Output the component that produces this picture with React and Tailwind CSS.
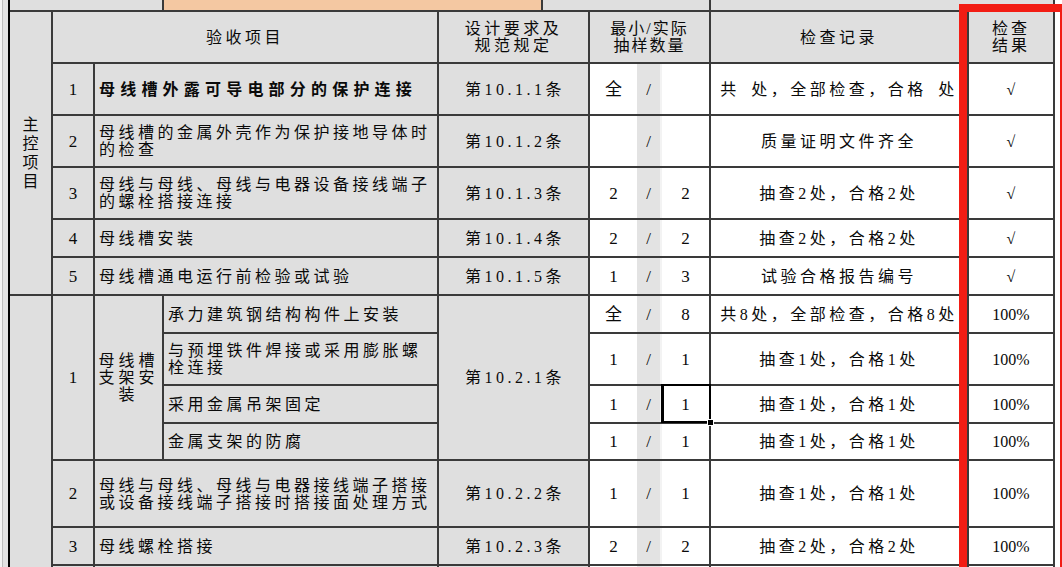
import React from 'react';

const mainRows = [
  {
    n: '1',
    item: ['母线槽外露可导电部分的保护连接'],
    bold: true,
    spec: '第10.1.1条',
    min: '全',
    act: '',
    rec: '共\u2002处，全部检查，合格\u2002处',
    res: '√',
    row: 'row-start-2',
  },
  {
    n: '2',
    item: ['母线槽的金属外壳作为保护接地导体时', '的检查'],
    spec: '第10.1.2条',
    min: '',
    act: '',
    rec: '质量证明文件齐全',
    res: '√',
    row: 'row-start-3',
  },
  {
    n: '3',
    item: ['母线与母线、母线与电器设备接线端子', '的螺栓搭接连接'],
    spec: '第10.1.3条',
    min: '2',
    act: '2',
    rec: '抽查2处，合格2处',
    res: '√',
    row: 'row-start-4',
  },
  {
    n: '4',
    item: ['母线槽安装'],
    spec: '第10.1.4条',
    min: '2',
    act: '2',
    rec: '抽查2处，合格2处',
    res: '√',
    row: 'row-start-5',
  },
  {
    n: '5',
    item: ['母线槽通电运行前检验或试验'],
    spec: '第10.1.5条',
    min: '1',
    act: '3',
    rec: '试验合格报告编号',
    res: '√',
    row: 'row-start-6',
  },
];

// sub rows of 母线槽支架安装
const subRows = [
  { item: ['承力建筑钢结构构件上安装'], min: '全', act: '8', rec: '共8处，全部检查，合格8处', res: '100%', row: 'row-start-7' },
  { item: ['与预埋铁件焊接或采用膨胀螺', '栓连接'], min: '1', act: '1', rec: '抽查1处，合格1处', res: '100%', row: 'row-start-8' },
  { item: ['采用金属吊架固定'], min: '1', act: '1', rec: '抽查1处，合格1处', res: '100%', row: 'row-start-9', selected: true },
  { item: ['金属支架的防腐'], min: '1', act: '1', rec: '抽查1处，合格1处', res: '100%', row: 'row-start-10' },
];

const generalRows = [
  {
    n: '2',
    item: ['母线与母线、母线与电器接线端子搭接', '或设备接线端子搭接时搭接面处理方式'],
    spec: '第10.2.2条',
    min: '1',
    act: '1',
    rec: '抽查1处，合格1处',
    res: '100%',
    row: 'row-start-11',
  },
  {
    n: '3',
    item: ['母线螺栓搭接'],
    spec: '第10.2.3条',
    min: '2',
    act: '2',
    rec: '抽查2处，合格2处',
    res: '100%',
    row: 'row-start-12',
  },
  { n: '', item: [''], spec: '', min: '', act: '', rec: '', res: '', row: 'row-start-13', blank: true },
];

const Lines = ({ lines }) =>
  lines.map((l, i) => (
    <span key={i} className="block whitespace-nowrap">
      {l}
    </span>
  ));

const Sample = ({ min, act, row, selected, blank }) => (
  <div className={`col-start-6 ${row} flex bg-white tracking-normal text-[17px]`}>
    <div className="w-[47px] flex items-center justify-center">{min}</div>
    <div className={`w-[25px] flex items-center justify-center border-r-2 border-[#f3f3f3] ${blank ? 'bg-[#e6e6e6]' : 'bg-[#e3e3e3]'}`}>
      {blank ? '' : '/'}
    </div>
    <div className="relative flex-1 flex items-center justify-center">
      {act}
      {selected && (
        <>
          <div className="absolute -left-[1px] -top-[2px] -right-[2px] -bottom-[1px] border-2 border-l-[3px] border-black" />
          <div className="absolute -right-[5px] -bottom-[4px] w-[7px] h-[7px] bg-black border border-white" />
        </>
      )}
    </div>
  </div>
);

const Tail = ({ rec, res, row }) => (
  <>
    <div className={`col-start-7 ${row} flex items-center justify-center bg-white whitespace-nowrap overflow-hidden`}>
      {rec}
    </div>
    <div className={`col-start-8 ${row} flex items-center justify-center bg-white tracking-normal`}>
      {res}
    </div>
  </>
);

export default function App() {
  return (
    <div className="relative w-[1062px] h-[567px] overflow-hidden bg-white text-[16px] leading-[17px] tracking-[3.5px] text-[#0a0a0a] font-['Liberation_Serif','Noto_Sans_CJK_SC',serif]">
      <div className="flex">
        {/* sheet edge */}
        <div className="flex w-[8px] shrink-0">
          <div className="w-[2px] bg-[#f3f3f3]" />
          <div className="w-[1px] bg-[#bdbdbd]" />
          <div className="flex-1 bg-[#e2e2e2]" />
        </div>

        <div className="border-l-2 border-black">
          {/* row above header */}
          <div className="flex h-[10px] gap-[2px] bg-[#3a3a3a] pr-[2px]">
            <div className="w-[152px] bg-[#dfdfdf]" />
            <div className="w-[377px] bg-[#f4c8a2]" />
            <div className="w-[166px] bg-[#dfdfdf]" />
            <div className="w-[342px] bg-[#dfdfdf]" />
          </div>

          <div className="grid grid-cols-[41px_40px_67px_273px_149px_119px_256px_84px] grid-rows-[50px_50px_50px_50px_36px_36px_36px_50px_36px_35px_65px_36px_40px] gap-[2px] bg-[#3a3a3a] pt-[2px] pr-[2px] pb-[2px]">
            {/* section label */}
            <div className="col-start-1 row-start-1 row-span-6 flex items-center justify-center bg-[#dfdfdf] leading-[19px] tracking-normal text-center">
              <span>
                主<br />控<br />项<br />目
              </span>
            </div>

            {/* header */}
            <div className="col-start-2 col-span-3 row-start-1 flex items-center justify-center bg-[#dfdfdf]">验收项目</div>
            <div className="col-start-5 row-start-1 flex items-center justify-center bg-[#dfdfdf] text-center">
              <span>
                设计要求及<br />规范规定
              </span>
            </div>
            <div className="col-start-6 row-start-1 flex items-center justify-center bg-[#dfdfdf] text-center tracking-[2px]">
              <span>
                最小/实际<br />抽样数量
              </span>
            </div>
            <div className="col-start-7 row-start-1 flex items-center justify-center bg-[#dfdfdf]">检查记录</div>
            <div className="col-start-8 row-start-1 flex items-center justify-center bg-[#dfdfdf] text-center tracking-[3px]">
              <span>
                检查<br />结果
              </span>
            </div>

            {/* main control rows */}
            {mainRows.map((r) => (
              <React.Fragment key={r.row}>
                <div className={`col-start-2 ${r.row} flex items-center justify-center bg-[#dfdfdf] tracking-normal text-[17px]`}>{r.n}</div>
                <div className={`col-start-3 col-span-2 ${r.row} flex items-center bg-[#dfdfdf] pl-[4px] ${r.bold ? 'font-bold tracking-[5.2px]' : ''}`}>
                  <div>
                    <Lines lines={r.item} />
                  </div>
                </div>
                <div className={`col-start-5 ${r.row} flex items-center justify-center bg-[#dfdfdf] pl-[3px]`}>{r.spec}</div>
                <Sample min={r.min} act={r.act} row={r.row} />
                <Tail rec={r.rec} res={r.res} row={r.row} />
              </React.Fragment>
            ))}

            {/* second section label (empty) */}
            <div className="col-start-1 row-start-7 row-span-7 bg-[#dfdfdf]" />

            {/* 支架安装 group */}
            <div className="col-start-2 row-start-7 row-span-4 flex items-center justify-center bg-[#dfdfdf] tracking-normal text-[17px]">1</div>
            <div className="col-start-3 row-start-7 row-span-4 flex items-center justify-center bg-[#dfdfdf] text-center tracking-[4px]">
              <span>
                母线槽<br />支架安<br />装
              </span>
            </div>
            <div className="col-start-5 row-start-7 row-span-4 flex items-center justify-center bg-[#dfdfdf] pl-[3px]">第10.2.1条</div>
            {subRows.map((r) => (
              <React.Fragment key={r.row}>
                <div className={`col-start-4 ${r.row} flex items-center bg-[#dfdfdf] pl-[4px]`}>
                  <div>
                    <Lines lines={r.item} />
                  </div>
                </div>
                <Sample min={r.min} act={r.act} row={r.row} selected={r.selected} />
                <Tail rec={r.rec} res={r.res} row={r.row} />
              </React.Fragment>
            ))}

            {/* remaining general rows */}
            {generalRows.map((r) => (
              <React.Fragment key={r.row}>
                <div className={`col-start-2 ${r.row} flex items-center justify-center bg-[#dfdfdf] tracking-normal text-[17px]`}>{r.n}</div>
                <div className={`col-start-3 col-span-2 ${r.row} flex items-center bg-[#dfdfdf] pl-[4px]`}>
                  <div>
                    <Lines lines={r.item} />
                  </div>
                </div>
                <div className={`col-start-5 ${r.row} flex items-center justify-center bg-[#dfdfdf] pl-[3px]`}>{r.spec}</div>
                <Sample min={r.min} act={r.act} row={r.row} blank={r.blank} />
                <Tail rec={r.rec} res={r.res} row={r.row} />
              </React.Fragment>
            ))}
          </div>
        </div>
      </div>

      {/* red highlight frame around the result column */}
      <div className="absolute left-[959px] top-[4px] w-[103px] h-[600px] border-l-[8px] border-t-[8px] border-r-[2px] border-[#f21d14]" />
    </div>
  );
}
